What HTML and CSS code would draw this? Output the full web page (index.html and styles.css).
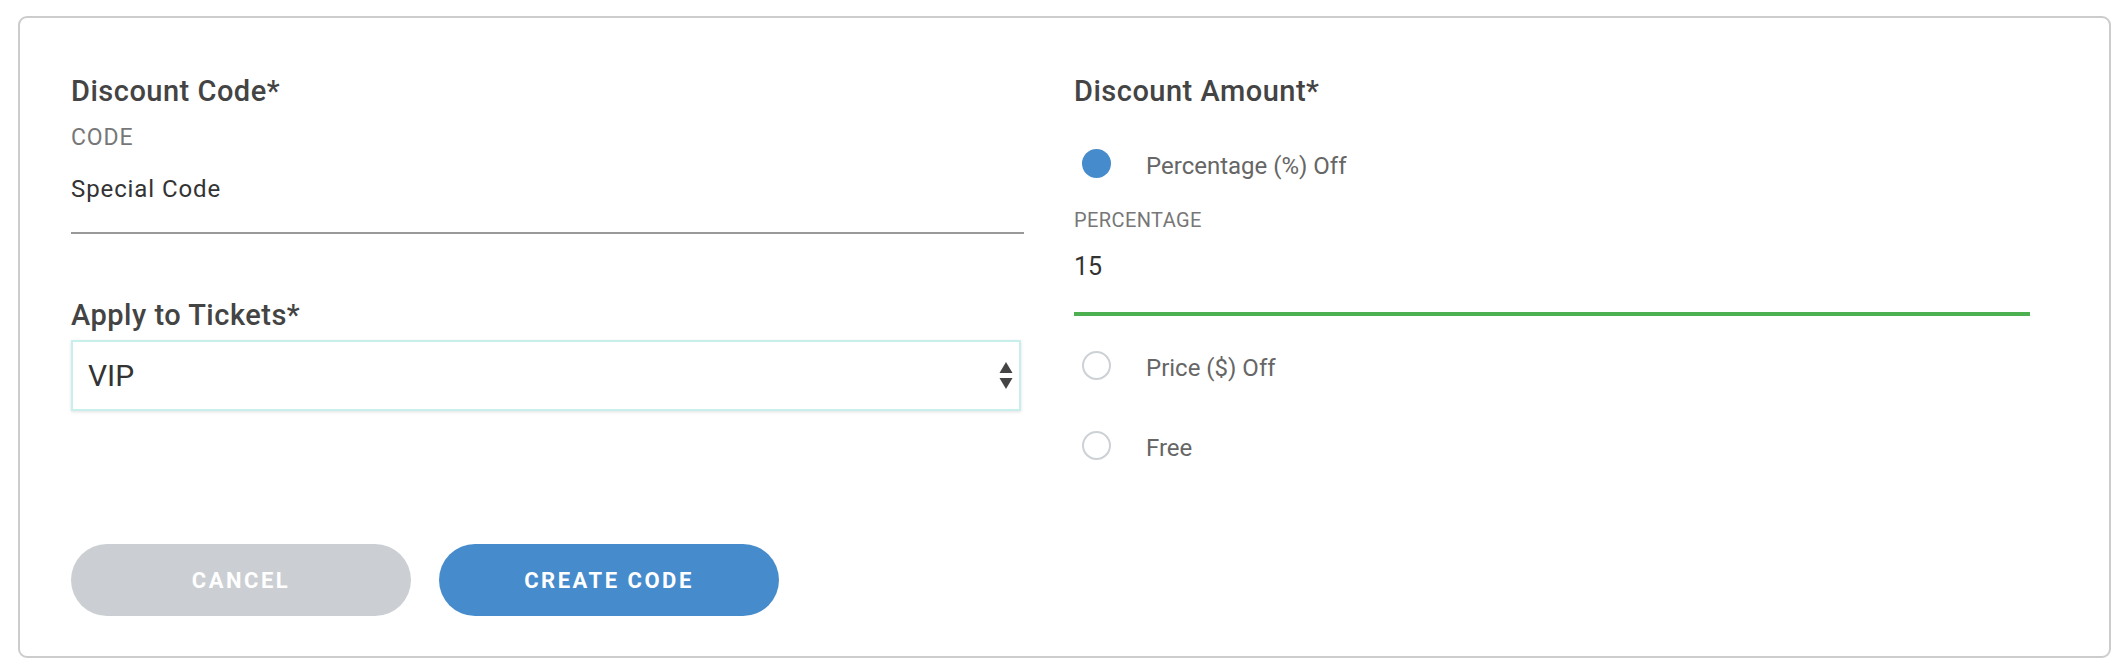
FILE: index.html
```html
<!DOCTYPE html>
<html lang="en">
<head>
<meta charset="utf-8">
<title>Discount Code</title>
<link rel="stylesheet" href="styles.css">
</head>
<body>
<form class="card">
  <div class="grid">
    <div class="col">
      <h2 class="heading">Discount Code*</h2>
      <div class="field-label label-code">CODE</div>
      <div class="text-input">Special Code</div>

      <h2 class="heading heading-tickets">Apply to Tickets*</h2>
      <div class="select">
        <span class="select-value">VIP</span>
        <svg class="select-arrows" width="14" height="28" viewBox="0 0 14 28">
          <path d="M7 0 L13.5 11 L0.5 11 Z" fill="#444"/>
          <path d="M0.5 16 L13.5 16 L7 27 Z" fill="#444"/>
        </svg>
      </div>

      <div class="actions">
        <button type="button" class="btn btn-cancel">CANCEL</button>
        <button type="button" class="btn btn-create">CREATE CODE</button>
      </div>
    </div>

    <div class="col">
      <h2 class="heading">Discount Amount*</h2>
      <div class="radio-row radio-first">
        <span class="radio radio-on"></span>
        <span class="radio-text">Percentage (%) Off</span>
      </div>
      <div class="field-label label-percent">PERCENTAGE</div>
      <div class="text-input text-input-active">15</div>
      <div class="radio-row radio-second">
        <span class="radio"></span>
        <span class="radio-text">Price ($) Off</span>
      </div>
      <div class="radio-row radio-third">
        <span class="radio"></span>
        <span class="radio-text">Free</span>
      </div>
    </div>
  </div>
</form>
</body>
</html>
```

FILE: styles.css
```css
* {
  box-sizing: border-box;
}

html, body {
  margin: 0;
  padding: 0;
  background: #ffffff;
  font-family: Roboto, "Liberation Sans", Arial, sans-serif;
}

.card {
  width: 2093px;
  margin: 16px 0 0 18px;
  border: 2px solid #cccccc;
  border-radius: 9px;
  padding: 56px 0 40px 51px;
  background: #ffffff;
}

.grid {
  display: grid;
  grid-template-columns: 953px 956px;
  column-gap: 50px;
  align-items: start;
}

.col {
  display: flex;
  flex-direction: column;
}

.heading {
  margin: 0;
  font-size: 29px;
  line-height: 34px;
  font-weight: 500;
  letter-spacing: 0.5px;
  color: #444444;
}

.field-label {
  margin-top: 18px;
  font-size: 20px;
  line-height: 24px;
  letter-spacing: 0.4px;
  color: #777777;
}

.label-code {
  font-size: 23px;
  letter-spacing: 0.9px;
}

.text-input {
  margin-top: 24px;
  font-size: 24px;
  line-height: 30px;
  letter-spacing: 0.9px;
  color: #333333;
  padding-bottom: 28px;
  border-bottom: 2px solid #999999;
}

.heading-tickets {
  margin-top: 64px;
}

.select {
  margin-top: 8px;
  width: 950px;
  height: 71px;
  border: 2px solid #c8efec;
  box-shadow: 0 1px 3px rgba(0, 0, 0, 0.12);
  display: flex;
  align-items: center;
  justify-content: space-between;
  padding: 0 6px 0 15px;
  background: #ffffff;
}

.select-value {
  font-size: 30px;
  line-height: 34px;
  color: #333333;
}

.select-arrows {
  display: block;
  margin-top: 1px;
}

.actions {
  margin-top: 133px;
  display: flex;
  gap: 28px;
}

.btn {
  width: 340px;
  height: 72px;
  border: none;
  border-radius: 36px;
  font-family: Roboto, "Liberation Sans", Arial, sans-serif;
  font-size: 22px;
  font-weight: 700;
  letter-spacing: 2.5px;
  color: #ffffff;
  padding: 0;
  cursor: pointer;
}

.btn-cancel {
  background: #cbced2;
}

.btn-create {
  background: #468bcb;
}

.radio-row {
  display: flex;
  align-items: flex-start;
  height: 34px;
}

.radio-first {
  margin-top: 41px;
}

.radio-second {
  margin-top: 35px;
}

.radio-third {
  margin-top: 46px;
}

.radio {
  width: 29px;
  height: 29px;
  margin-left: 8px;
  border-radius: 50%;
  border: 2px solid #cdd1d6;
  background: #ffffff;
  flex: none;
}

.radio-on {
  border: none;
  background: #468bcb;
}

.radio-text {
  margin-left: 35px;
  font-size: 24px;
  line-height: 34px;
  color: #666666;
}

.label-percent {
  margin-top: 25px;
}

.text-input-active {
  margin-top: 20px;
  font-size: 25px;
  letter-spacing: 0;
  padding-bottom: 30px;
  border-bottom: 4px solid #4caf50;
}
```
